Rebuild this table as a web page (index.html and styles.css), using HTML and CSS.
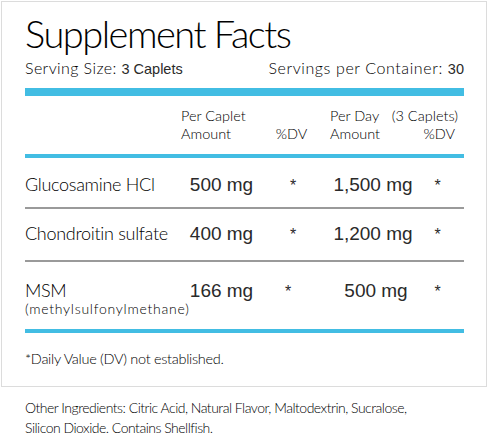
FILE: index.html
```html
<!DOCTYPE html>
<html>
<head>
<meta charset="utf-8">
<link rel="stylesheet" href="styles.css">
</head>
<body>
<div class="panel">
  <h1 class="title">Supplement Facts</h1>
  <div class="serving">
    <div>Serving Size: <span class="arial">3 Caplets</span></div>
    <div class="per">Servings per Container: <span class="arial">30</span></div>
  </div>
  <div class="bar bar-thick"></div>
  <div class="head">
    <div></div>
    <div class="h2">Per Caplet<br>Amount</div>
    <div class="h3"><br>%DV</div>
    <div class="h4">Per Day<br>Amount</div>
    <div class="h5">(3 Caplets)<br><span class="dv">%DV</span></div>
  </div>
  <div class="bar bar-mid"></div>
  <div class="row r1">
    <div class="name">Glucosamine HCl</div>
    <div class="c2">500 mg</div>
    <div class="c3">*</div>
    <div class="c4">1,500 mg</div>
    <div class="c5">*</div>
  </div>
  <div class="rule"></div>
  <div class="row r2">
    <div class="name">Chondroitin sulfate</div>
    <div class="c2">400 mg</div>
    <div class="c3">*</div>
    <div class="c4">1,200 mg</div>
    <div class="c5">*</div>
  </div>
  <div class="rule"></div>
  <div class="row r3">
    <div class="name">MSM<div class="sub">(methylsulfonylmethane)</div></div>
    <div class="c2">166 mg</div>
    <div class="c3 c3b">*</div>
    <div class="c4 c4b">500 mg</div>
    <div class="c5">*</div>
  </div>
  <div class="bar bar-mid"></div>
  <p class="foot">*Daily Value (DV) not established.</p>
</div>
<p class="other">Other Ingredients: Citric Acid, Natural Flavor, Maltodextrin, Sucralose,<br>Silicon Dioxide. Contains Shellfish.</p>
</body>
</html>
```
FILE: styles.css
```css
* { box-sizing: border-box; }
html, body { margin: 0; padding: 0; background: #fff; }
body {
  font-family: Lato, "Open Sans", sans-serif;
  font-weight: 300;
  color: #000;
  width: 488px;
  height: 434px;
  overflow: hidden;
}
.panel {
  margin: 1px 0 0 1px;
  width: 486px;
  height: 386px;
  border: 1px solid #dcdcdc;
  padding: 9px 22px 0 23px;
}
.title {
  margin: 0;
  font-weight: 300;
  font-size: 38px;
  line-height: 44px;
  letter-spacing: -1.5px;
  color: #000;
}
.serving {
  display: flex;
  justify-content: space-between;
  font-size: 16px;
  line-height: 18px;
  letter-spacing: 0.4px;
  margin-top: 4px;
}
.per { letter-spacing: 0.6px; }
.arial {
  font-family: "Liberation Sans", Arial, sans-serif;
  font-weight: 400;
  font-size: 14.5px;
  letter-spacing: 0;
  color: #2a2a2a;
}
.bar { background: #42bde3; }
.bar-thick { height: 8px; margin-top: 10px; }
.bar-mid { height: 4px; }
.head {
  display: grid;
  grid-template-columns: 156px 82px 57px 68px 1fr;
  height: 58px;
  font-size: 14.5px;
  line-height: 18px;
  padding-top: 11px;
}
.h3 { text-align: center; }
.h4 { padding-left: 10px; }
.h5 { text-align: right; padding-right: 6px; }
.dv { padding-right: 3px; }
.row {
  display: grid;
  grid-template-columns: 156px 81px 62px 98px 1fr;
  align-items: baseline;
  align-content: start;
  line-height: 22px;
}
.r1 { height: 49px; padding-top: 15px; }
.r2 { height: 51px; padding-top: 13px; }
.r3 { height: 67px; padding-top: 17px; }
.name { font-size: 18px; letter-spacing: -0.3px; }
.sub { font-size: 14px; line-height: 16px; letter-spacing: 0.75px; }
.c2, .c3, .c4, .c5 {
  font-family: "Liberation Sans", Arial, sans-serif;
  font-weight: 400;
  font-size: 19px;
  text-align: center;
  color: #2a2a2a;
}
.c3 { font-size: 16px; }
.c3b { padding-right: 10px; }
.c4b { padding-left: 6px; }
.c5 { font-size: 16px; padding-right: 11px; }
.rule { height: 2px; background: #9a9a9a; }
.foot {
  margin: 0;
  padding-top: 17px;
  font-size: 14.5px;
  line-height: 18px;
  letter-spacing: -0.3px;
}
.other {
  margin: 0;
  padding: 11px 0 0 25px;
  font-size: 14px;
  line-height: 20px;
  letter-spacing: -0.5px;
}
```
